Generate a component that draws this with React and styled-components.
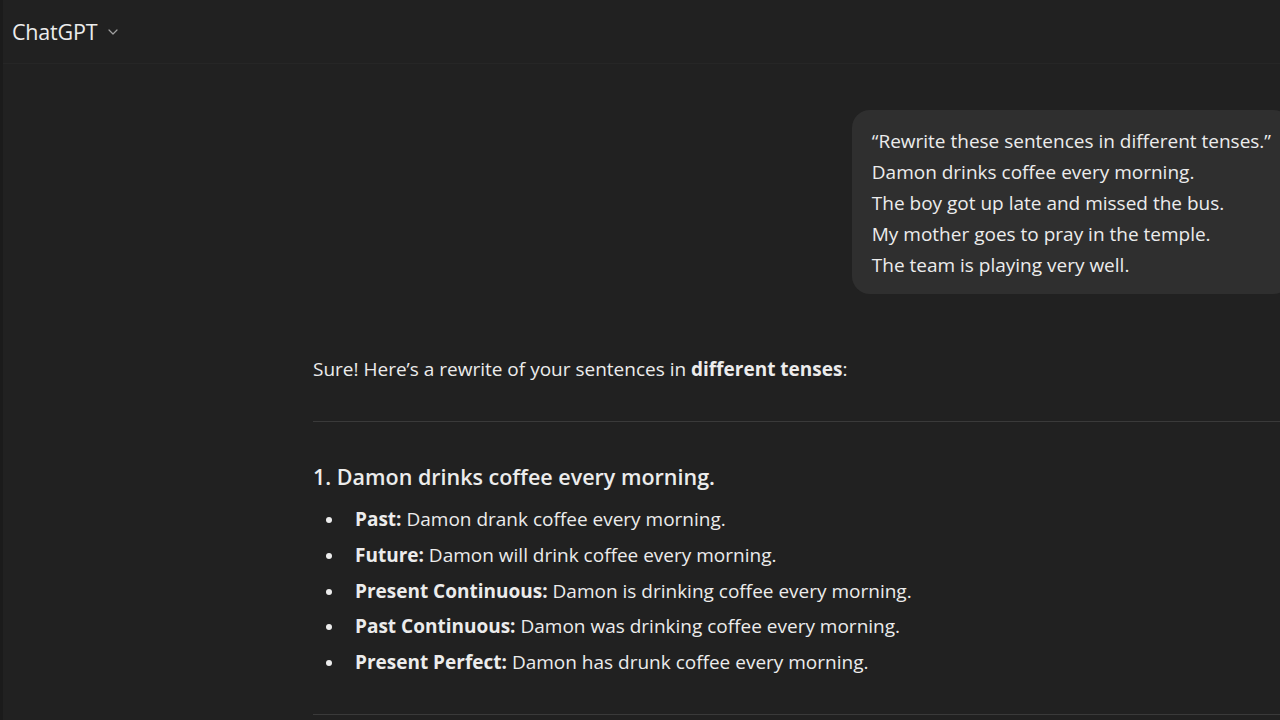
import React from "react";
import styled, { createGlobalStyle } from "styled-components";

const GlobalStyle = createGlobalStyle`
  html, body {
    margin: 0;
    padding: 0;
    background: #212121;
    overflow: hidden;
  }
  body {
    font-family: "Open Sans", "Noto Sans", sans-serif;
    color: #ececec;
  }
`;

const Page = styled.div`
  width: 1280px;
  height: 720px;
  overflow: hidden;
  background: #212121;
  border-left: 3px solid #1b1b1b;
  box-sizing: border-box;
  display: flex;
  flex-direction: column;
`;

const Header = styled.header`
  height: 63px;
  flex-shrink: 0;
  display: flex;
  align-items: center;
  padding-left: 9px;
  border-bottom: 1px solid #262626;
`;

const ModelName = styled.div`
  display: flex;
  align-items: center;
  gap: 8px;
  font-size: 21.5px;
  color: #ececec;
  letter-spacing: -0.2px;
`;

const Thread = styled.main`
  padding: 46px 0 0 310px;
  width: 978px;
  flex-shrink: 0;
`;

const UserRow = styled.div`
  display: flex;
  justify-content: flex-end;
`;

const Bubble = styled.div`
  background: #2f2f2f;
  border-radius: 18px;
  padding: 16px 20px 13px 20px;
  font-size: 19px;
  line-height: 31px;
  color: #ececec;
  white-space: nowrap;
`;

const Reply = styled.div`
  margin-top: 60px;
  font-size: 19px;
  color: #ececec;
`;

const Paragraph = styled.p`
  margin: 0;
  line-height: 30px;
`;

const Divider = styled.hr`
  border: none;
  border-top: 1px solid #3a3a3a;
  margin: ${({ $top }) => $top}px -40px 0 0;
`;

const Heading = styled.h3`
  margin: 38px 0 0;
  font-size: 21.5px;
  font-weight: 600;
  line-height: 34px;
`;

const List = styled.ul`
  margin: 8px 0 0;
  padding-left: 42px;
  list-style: none;
`;

const Item = styled.li`
  position: relative;
  line-height: 35.75px;

  &::before {
    content: "";
    position: absolute;
    left: -29px;
    top: 15px;
    width: 6px;
    height: 6px;
    border-radius: 50%;
    background: #ececec;
  }
`;

const Chevron = () => (
  <svg width="16" height="16" viewBox="0 0 24 24" fill="none" stroke="#a0a0a0" strokeWidth="1.8" strokeLinecap="round" strokeLinejoin="round">
    <path d="M6 9l6 6 6-6" />
  </svg>
);

const tenses = [
  ["Past:", "Damon drank coffee every morning."],
  ["Future:", "Damon will drink coffee every morning."],
  ["Present Continuous:", "Damon is drinking coffee every morning."],
  ["Past Continuous:", "Damon was drinking coffee every morning."],
  ["Present Perfect:", "Damon has drunk coffee every morning."],
];

export default function App() {
  return (
    <>
      <GlobalStyle />
      <Page>
        <Header>
          <ModelName>
            ChatGPT <Chevron />
          </ModelName>
        </Header>
        <Thread>
          <UserRow>
            <Bubble>
              “Rewrite these sentences in different tenses.”
              <br />
              Damon drinks coffee every morning.
              <br />
              The boy got up late and missed the bus.
              <br />
              My mother goes to pray in the temple.
              <br />
              The team is playing very well.
            </Bubble>
          </UserRow>
          <Reply>
            <Paragraph>
              Sure! Here’s a rewrite of your sentences in <strong>different tenses</strong>:
            </Paragraph>
            <Divider $top={37} />
            <Heading>1. Damon drinks coffee every morning.</Heading>
            <List>
              {tenses.map(([label, text]) => (
                <Item key={label}>
                  <strong>{label}</strong> {text}
                </Item>
              ))}
            </List>
            <Divider $top={33} />
          </Reply>
        </Thread>
      </Page>
    </>
  );
}
